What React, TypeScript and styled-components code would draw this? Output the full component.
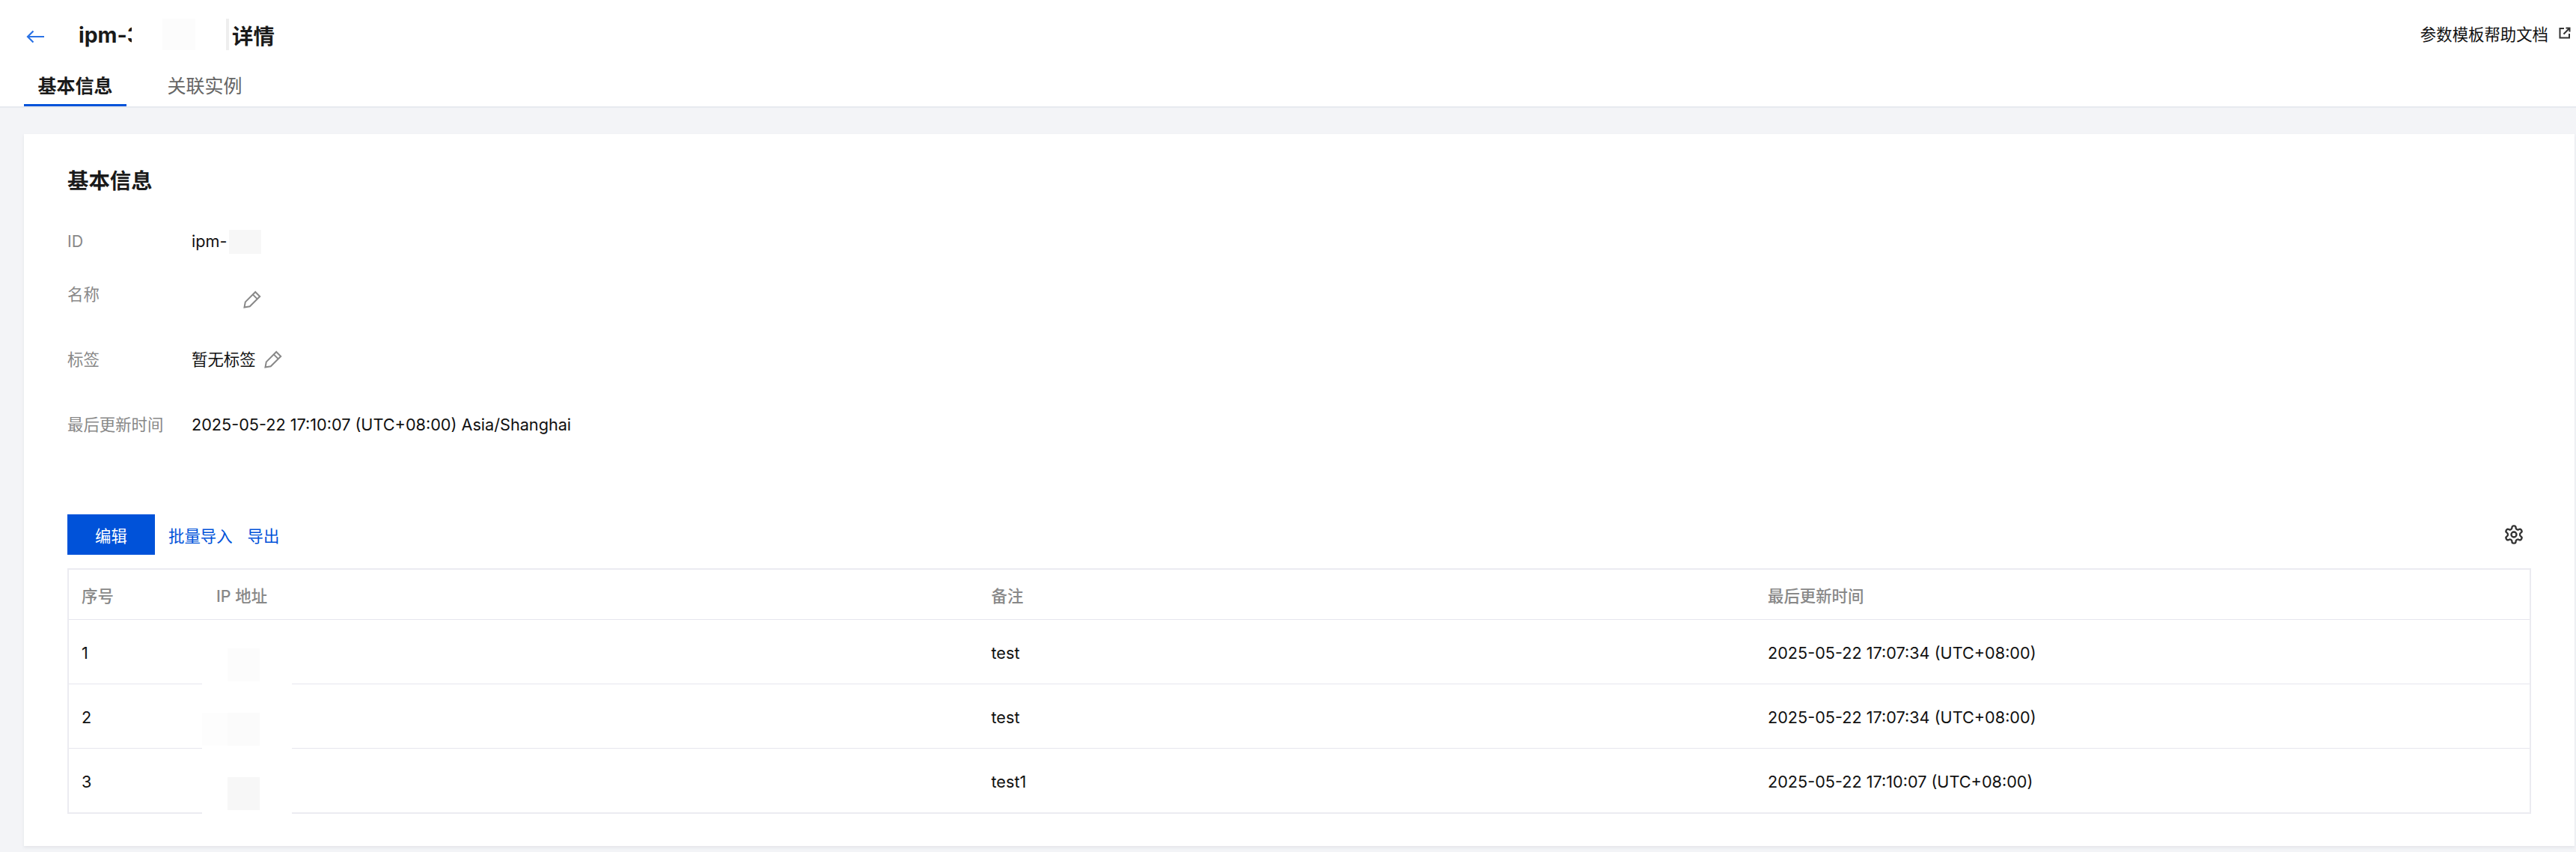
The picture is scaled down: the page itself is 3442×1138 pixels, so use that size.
import React from "react";
import styled, { createGlobalStyle } from "styled-components";

const FONT = `Inter, "Noto Sans CJK SC", sans-serif`;

const Global = createGlobalStyle`
  html, body { margin: 0; padding: 0; background: #f3f4f7; }
  body { font-family: ${FONT}; font-size: 21.4px; color: #111; }
  * { box-sizing: border-box; }
`;

const Page = styled.div`
  width: 3442px;
  height: 1138px;
  display: flex;
  flex-direction: column;
  overflow: hidden;
`;
const Header = styled.header`
  height: 144px;
  background: #fff;
  border-bottom: 2px solid #e7eaef;
  padding: 0 0 0 32px;
  display: flex;
  flex-direction: column;
`;
const TitleBar = styled.div`
  height: 92px;
  display: flex;
  align-items: center;
  padding-right: 7px;
`;
const BackButton = styled.span`
  width: 73px;
  padding: 5px 0 0 3px;
  display: flex;
  align-items: center;
  color: #2a72e5;
`;
const Title = styled.h1`
  margin: 0;
  font-size: 28.4px;
  font-weight: 700;
  color: #1a1a1a;
  display: flex;
  align-items: center;
`;
const TitleId = styled.span`
  position: relative;
  display: block;
  width: 205px;
`;
const TitleMask = styled.span`
  position: absolute;
  left: 71px;
  top: -4px;
  width: 130px;
  height: 42px;
  background: linear-gradient(90deg, #fff 0 41px, #fcfcfc 41px 85px, #fff 85px 126px, #eeeeee 126px);
`;
const HelpLink = styled.a`
  margin-left: auto;
  margin-bottom: 4px;
  display: flex;
  align-items: center;
  gap: 14px;
  font-size: 21.4px;
  color: #111;
`;
const Tabs = styled.nav`
  display: flex;
  gap: 36px;
`;
const Tab = styled.div<{ $active?: boolean }>`
  width: 137px;
  height: 50px;
  text-align: center;
  line-height: 46px;
  font-size: 25px;
  font-weight: ${(p) => (p.$active ? 600 : 400)};
  color: ${(p) => (p.$active ? "#1a1a1a" : "#666")};
  border-bottom: 3px solid ${(p) => (p.$active ? "#0052d9" : "transparent")};
`;
const Main = styled.main`
  flex: 1;
  padding: 35px 2px 8px 32px;
  display: flex;
`;
const Panel = styled.section`
  flex: 1;
  background: #fff;
  box-shadow: 0 2px 4px rgba(54, 58, 80, 0.08);
  padding: 41px 58px 0 58px;
`;
const SectionTitle = styled.h2`
  margin: 0 0 40px;
  font-size: 28.4px;
  line-height: 44px;
  font-weight: 700;
  color: #1a1a1a;
`;
const Fields = styled.dl`
  margin: 0;
  display: grid;
  grid-template-columns: 166px 1fr;
`;
const Label = styled.dt<{ $h: number }>`
  height: ${(p) => p.$h}px;
  line-height: 36px;
  color: #888;
`;
const Value = styled.dd`
  margin: 0;
  display: flex;
  align-items: flex-start;
  line-height: 36px;
  font-size: 21.65px;
  color: #111;
`;
const IdMask = styled.span`
  width: 43px;
  height: 32px;
  margin: 3px 0 0 3px;
  background: #f7f7f7;
`;
const NameGap = styled.span`
  width: 69px;
`;
const PencilWrap = styled.span<{ $top: number }>`
  display: flex;
  color: #888;
  margin-top: ${(p) => p.$top}px;
`;
const TagText = styled.span`
  margin-right: 11px;
  font-size: 21.4px;
`;
const Toolbar = styled.div`
  margin-top: 102px;
  height: 54px;
  display: flex;
  align-items: center;
`;
const PrimaryButton = styled.button`
  width: 117px;
  height: 54px;
  border: 0;
  padding: 0;
  background: #0052d9;
  color: #fff;
  font: 400 21.4px ${FONT};
  margin-right: 18px;
`;
const LinkButton = styled.a`
  color: #0052d9;
  font-size: 21.4px;
  font-weight: 400;
  margin-right: 20px;
`;
const Gear = styled.span`
  margin-left: auto;
  margin-right: 9px;
  display: flex;
  color: #333;
`;
const TableWrap = styled.div`
  margin-top: 18px;
  border: 2px solid #ebebf1;
`;
const Table = styled.div`
  display: grid;
  grid-template-columns: 180px 1035.5px 1037.5px 1fr;
`;
const HeadCell = styled.div`
  height: 67px;
  padding-left: 17px;
  display: flex;
  align-items: center;
  color: #888;
  font-weight: 500;
  border-bottom: 1px solid #e6e6ee;
`;
const Cell = styled.div<{ $last?: boolean }>`
  position: relative;
  height: ${(p) => (p.$last ? 85 : 86)}px;
  padding: 2px 0 0 17px;
  display: flex;
  align-items: center;
  font-size: 21.65px;
  color: #111;
  border-bottom: ${(p) => (p.$last ? "none" : "1px solid #e6e6ee")};
`;
const IpPatch = styled.span`
  position: absolute;
  left: -2px;
  top: 0;
  bottom: -3px;
  width: 120px;
  background: #fff;
`;
const IpMask = styled.span<{ $wide?: boolean; $shade: string }>`
  position: absolute;
  top: 38px;
  left: ${(p) => (p.$wide ? "-2px" : "32px")};
  width: ${(p) => (p.$wide ? "77px" : "43px")};
  height: 44px;
  background: ${(p) => p.$shade};
`;

const Pencil = () => (
  <svg width="24" height="24" viewBox="0 0 24 24" fill="none" stroke="currentColor" strokeWidth="2" strokeLinejoin="miter">
    <path d="M1.5 22.5 L2.8 15.4 L16.2 2 L22.2 8 L8.8 21.2 Z" />
    <path d="M12.8 5.4 L18.8 11.4" />
  </svg>
);

const ExternalLink = () => (
  <svg width="16" height="16" viewBox="0 0 16 16" fill="none" stroke="#333" strokeWidth="2">
    <path d="M7 2H1.5V14.5H14V9" />
    <path d="M6.5 9.5L14 2M9.5 1.5H14.5V6.5" />
  </svg>
);

const BackArrow = () => (
  <svg width="24" height="18" viewBox="0 0 24 18" fill="none" stroke="currentColor" strokeWidth="2.2">
    <path d="M24 9H2M9.5 1.5L2 9L9.5 16.5" />
  </svg>
);

const GearIcon = () => (
  <svg width="28" height="28" viewBox="0 0 24 24" fill="none" stroke="currentColor" strokeWidth="2" strokeLinecap="round" strokeLinejoin="round">
    <path d="M12.22 2h-.44a2 2 0 0 0-2 2v.18a2 2 0 0 1-1 1.73l-.43.25a2 2 0 0 1-2 0l-.15-.08a2 2 0 0 0-2.73.73l-.22.38a2 2 0 0 0 .73 2.73l.15.1a2 2 0 0 1 1 1.72v.51a2 2 0 0 1-1 1.74l-.15.09a2 2 0 0 0-.73 2.73l.22.38a2 2 0 0 0 2.73.73l.15-.08a2 2 0 0 1 2 0l.43.25a2 2 0 0 1 1 1.73V20a2 2 0 0 0 2 2h.44a2 2 0 0 0 2-2v-.18a2 2 0 0 1 1-1.73l.43-.25a2 2 0 0 1 2 0l.15.08a2 2 0 0 0 2.73-.73l.22-.39a2 2 0 0 0-.73-2.73l-.15-.08a2 2 0 0 1-1-1.74v-.5a2 2 0 0 1 1-1.74l.15-.09a2 2 0 0 0 .73-2.73l-.22-.38a2 2 0 0 0-2.73-.73l-.15.08a2 2 0 0 1-2 0l-.43-.25a2 2 0 0 1-1-1.73V4a2 2 0 0 0-2-2z" />
    <circle cx="12" cy="12" r="3" />
  </svg>
);

const rows = [
  { n: "1", note: "test", time: "2025-05-22 17:07:34 (UTC+08:00)", shade: "#fcfcfc", wide: false },
  { n: "2", note: "test", time: "2025-05-22 17:07:34 (UTC+08:00)", shade: "linear-gradient(90deg, #fdfdfd 0 34px, #fbfbfb 34px)", wide: true },
  { n: "3", note: "test1", time: "2025-05-22 17:10:07 (UTC+08:00)", shade: "#f7f7f7", wide: false },
];

export default function App() {
  return (
    <>
      <Global />
      <Page>
        <Header>
          <TitleBar>
            <BackButton><BackArrow /></BackButton>
            <Title>
              <TitleId>ipm-3<TitleMask /></TitleId>
              详情
            </Title>
            <HelpLink>参数模板帮助文档<ExternalLink /></HelpLink>
          </TitleBar>
          <Tabs>
            <Tab $active>基本信息</Tab>
            <Tab>关联实例</Tab>
          </Tabs>
        </Header>
        <Main>
          <Panel>
            <SectionTitle>基本信息</SectionTitle>
            <Fields>
              <Label $h={71}>ID</Label>
              <Value>ipm-<IdMask /></Value>
              <Label $h={87}>名称</Label>
              <Value><NameGap /><PencilWrap $top={13}><Pencil /></PencilWrap></Value>
              <Label $h={87}>标签</Label>
              <Value><TagText>暂无标签</TagText><PencilWrap $top={6}><Pencil /></PencilWrap></Value>
              <Label $h={36}>最后更新时间</Label>
              <Value>2025-05-22 17:10:07 (UTC+08:00) Asia/Shanghai</Value>
            </Fields>
            <Toolbar>
              <PrimaryButton>编辑</PrimaryButton>
              <LinkButton>批量导入</LinkButton>
              <LinkButton>导出</LinkButton>
              <Gear><GearIcon /></Gear>
            </Toolbar>
            <TableWrap>
              <Table>
                <HeadCell>序号</HeadCell>
                <HeadCell>IP 地址</HeadCell>
                <HeadCell>备注</HeadCell>
                <HeadCell>最后更新时间</HeadCell>
                {rows.map((r, i) => {
                  const last = i === rows.length - 1;
                  return (
                    <React.Fragment key={r.n}>
                      <Cell $last={last}>{r.n}</Cell>
                      <Cell $last={last}>
                        <IpPatch />
                        <IpMask $wide={r.wide} $shade={r.shade} />
                      </Cell>
                      <Cell $last={last}>{r.note}</Cell>
                      <Cell $last={last}>{r.time}</Cell>
                    </React.Fragment>
                  );
                })}
              </Table>
            </TableWrap>
          </Panel>
        </Main>
      </Page>
    </>
  );
}
